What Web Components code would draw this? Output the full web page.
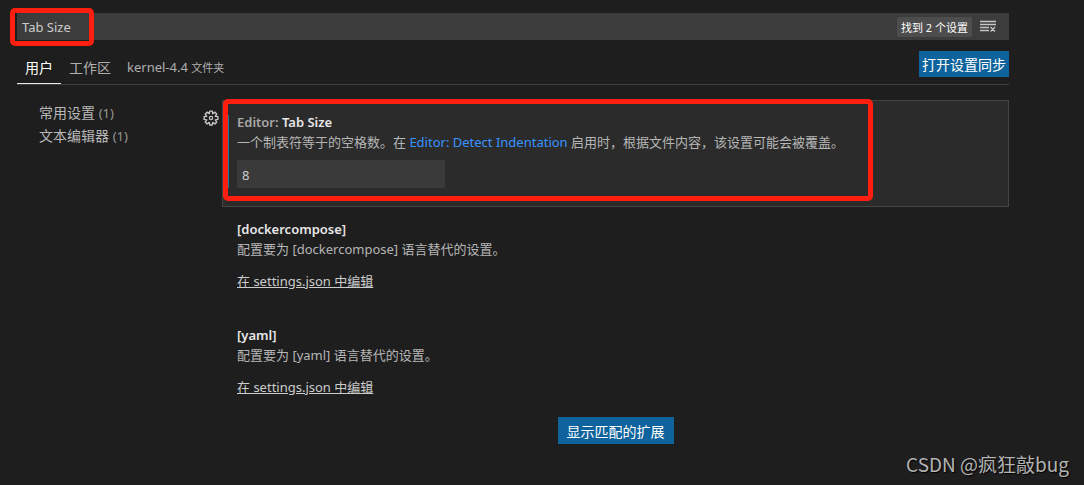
<!DOCTYPE html>
<html lang="zh-CN">
<head>
<meta charset="utf-8">
<title>设置</title>
<style>
  body {
    margin: 0;
    min-height: 100vh;
    background: #1e1e1e;
    color: #cccccc;
    font: 14px/20px "Noto Sans", "Noto Sans CJK SC", sans-serif;
  }
</style>
</head>
<body>
<settings-editor></settings-editor>

<template id="t-editor">
  <style>
    :host { display: flex; flex-direction: column; min-height: 100vh; box-sizing: border-box; padding: 13px 75px 0 17px; }
    main { display: grid; grid-template-columns: 186px 1fr; margin-top: 15px; }
    .more { display: flex; justify-content: center; padding-left: 19px; margin-top: -2px; }
    footer { margin: auto -60px 9px 0; text-align: right; font: 19px/24px "Noto Sans CJK SC", sans-serif; color: #b4b4b4; text-shadow: 1px 1px 1px #000; }
  </style>
  <settings-search></settings-search>
  <settings-tabs></settings-tabs>
  <main>
    <settings-toc></settings-toc>
    <section>
      <setting-item focused category="Editor: " name="Tab Size">
        一个制表符等于的空格数。在 <setting-link>Editor: Detect Indentation</setting-link> 启用时，根据文件内容，该设置可能会被覆盖。
        <setting-number slot="control" label="Tab Size" value="8"></setting-number>
      </setting-item>
      <setting-item name="[dockercompose]">
        配置要为 [dockercompose] 语言替代的设置。
        <setting-link plain slot="control">在 settings.json 中编辑</setting-link>
      </setting-item>
      <setting-item name="[yaml]">
        配置要为 [yaml] 语言替代的设置。
        <setting-link plain slot="control">在 settings.json 中编辑</setting-link>
      </setting-item>
      <div class="more"><action-button wide>显示匹配的扩展</action-button></div>
    </section>
  </main>
  <footer>CSDN @疯狂敲bug</footer>
</template>

<template id="t-search">
  <style>
    :host { display: flex; align-items: center; position: relative; height: 27px; background: #3c3c3c; }
    input { flex: 1; min-width: 0; height: 27px; box-sizing: border-box; padding: 0 5px; border: 0; outline: 0; background: none; color: #cccccc; font: inherit; font-size: 13px; }
    .count { padding: 1px 4px 0; border-radius: 2px; background: #4d4d4d; color: #fff; font-size: 11px; line-height: 19px; }
    button { display: flex; margin: 0 12px 0 8px; padding: 0; border: 0; background: none; color: #c5c5c5; }
    mark-box { left: -7px; top: -5px; width: 84px; height: 38px; }
  </style>
  <input type="text" aria-label="搜索设置" value="Tab Size">
  <span class="count">找到 2 个设置</span>
  <button aria-label="清除搜索结果">
    <svg width="17" height="16" viewBox="0 0 17 16" fill="none" stroke="currentColor">
      <path d="M0 2.5h16M0 5.5h16M0 8.5h9M0 11.5h9M10.5 8l4.500 4.500M15 8l-4.500 4.500" stroke-width="1.3"/>
    </svg>
  </button>
  <mark-box></mark-box>
</template>

<template id="t-mark">
  <style>
    :host { position: absolute; box-sizing: border-box; border: 5px solid #ff1e10; border-radius: 5px; pointer-events: none; }
  </style>
</template>

<template id="t-tabs">
  <style>
    :host { display: flex; justify-content: space-between; align-items: flex-start; height: 34px; margin-top: 10px; border-bottom: 1px solid #404040; }
    nav { display: flex; height: 34px; }
    button { padding: 2px 8px 0; border: 0; border-bottom: 1px solid transparent; background: none; color: #b0b0b0; font: inherit; }
    button[aria-selected=true] { color: #fff; border-color: #e7e7e7; }
    .folder { font-size: 13px; }
    small { font-size: 11px; }
    action-button { margin-top: 1px; }
  </style>
  <nav role="tablist">
    <button role="tab" aria-selected="true">用户</button>
    <button role="tab" aria-selected="false">工作区</button>
    <button role="tab" aria-selected="false" class="folder">kernel-4.4 <small>文件夹</small></button>
  </nav>
  <action-button>打开设置同步</action-button>
</template>

<template id="t-button">
  <style>
    :host { display: block; }
    button { display: block; padding: 4px 3px 2px; border: 0; background: #0e639c; color: #fff; font: inherit; white-space: nowrap; }
    :host([wide]) button { padding: 5px 9px 2px; }
  </style>
  <button><slot></slot></button>
</template>

<template id="t-toc">
  <style>
    ul { margin: 0; padding: 1px 0 0 22px; list-style: none; }
    a { display: block; height: 23px; line-height: 23px; color: #b8b8b8; text-decoration: none; }
    span { font-size: 13px; color: #969696; }
  </style>
  <ul>
    <li><a href="#common">常用设置 <span>(1)</span></a></li>
    <li><a href="#editor">文本编辑器 <span>(1)</span></a></li>
  </ul>
</template>

<template id="t-item">
  <style>
    :host { display: grid; grid-template-columns: 19px 1fr; }
    .gear { display: none; align-self: start; margin: 10px 0 0; padding: 0; border: 0; background: none; color: #c5c5c5; }
    .body { grid-column: 2; position: relative; box-sizing: border-box; height: 106px; padding: 11px 14px 0; border: 1px solid transparent; }
    h2 { margin: 0; font-size: 13px; line-height: 20px; font-weight: 600; color: #e7e7e7; }
    h2 span { color: #a8a8a8; }
    h2 b { font-weight: inherit; }
    p { margin: 0; line-height: 20px; color: #b6b6b6; font-size: 13px; }
    .control { margin-top: 12px; }
    mark-box, .modified { display: none; }
    :host([focused]) .gear { display: block; }
    :host([focused]) .body { height: 107px; border-color: #454545; background: #2b2b2b; }
    :host([focused]) .control { margin-top: 8px; }
    :host([focused]) mark-box { display: block; left: 0; top: -2px; width: 650px; height: 102px; }
    :host([focused]) .modified { display: block; position: absolute; left: 5px; top: 14px; width: 1px; height: 73px; background: #0c7d9d; }
  </style>
  <button class="gear" aria-label="更多操作">
    <svg width="16" height="16" viewBox="0 0 16 16" style="display:block" fill="none" stroke="currentColor" stroke-width="1.2" stroke-linejoin="round">
      <path d="M6.9 1h2.2l.4 2.2 1.9-1.3 1.6 1.6-1.3 1.9 2.3.4v2.4l-2.3.4 1.3 1.9-1.6 1.6-1.9-1.3-.4 2.2H6.900l-.4-2.200-1.900 1.300L3 10.500l1.300-1.900L2 8.200V5.800l2.300-.4L3 3.500l1.600-1.600 1.900 1.300z" transform="translate(-1.200 0) scale(1.150)"/>
      <circle cx="8" cy="8" r="1.700"/>
    </svg>
  </button>
  <div class="body">
    <div class="modified"></div>
    <h2><span></span><b></b></h2>
    <p><slot></slot></p>
    <div class="control"><slot name="control"></slot></div>
    <mark-box></mark-box>
  </div>
</template>

<template id="t-link">
  <style>
    :host { display: inline; font-size: 13px; }
    a { color: #3794ff; text-decoration: none; }
    :host([plain]) a { color: #cccccc; text-decoration: underline; }
  </style>
  <a href="#setting"><slot></slot></a>
</template>

<template id="t-number">
  <style>
    :host { display: block; }
    input { display: block; box-sizing: border-box; width: 208px; height: 28px; padding: 2px 5px 0; border: 0; outline: 0; background: #3a3a3a; color: #cccccc; font: inherit; font-size: 13px; }
  </style>
  <input type="text" inputmode="numeric">
</template>

<script>
  class Base extends HTMLElement {
    constructor() {
      super();
      const t = document.getElementById(this.constructor.template);
      this.attachShadow({ mode: "open" }).append(t.content.cloneNode(true));
    }
  }
  const simple = (tag, id) => customElements.define(tag, class extends Base { static template = id; });
  simple("mark-box", "t-mark");
  simple("action-button", "t-button");
  simple("setting-link", "t-link");
  simple("settings-search", "t-search");
  simple("settings-tabs", "t-tabs");
  simple("settings-toc", "t-toc");

  customElements.define("setting-number", class extends Base {
    static template = "t-number";
    connectedCallback() {
      const input = this.shadowRoot.querySelector("input");
      input.value = this.getAttribute("value");
      input.setAttribute("aria-label", this.getAttribute("label"));
    }
  });
  customElements.define("setting-item", class extends Base {
    static template = "t-item";
    connectedCallback() {
      this.shadowRoot.querySelector("h2 span").textContent = this.getAttribute("category") || "";
      this.shadowRoot.querySelector("h2 b").textContent = this.getAttribute("name");
    }
  });
  simple("settings-editor", "t-editor");
</script>
</body>
</html>
